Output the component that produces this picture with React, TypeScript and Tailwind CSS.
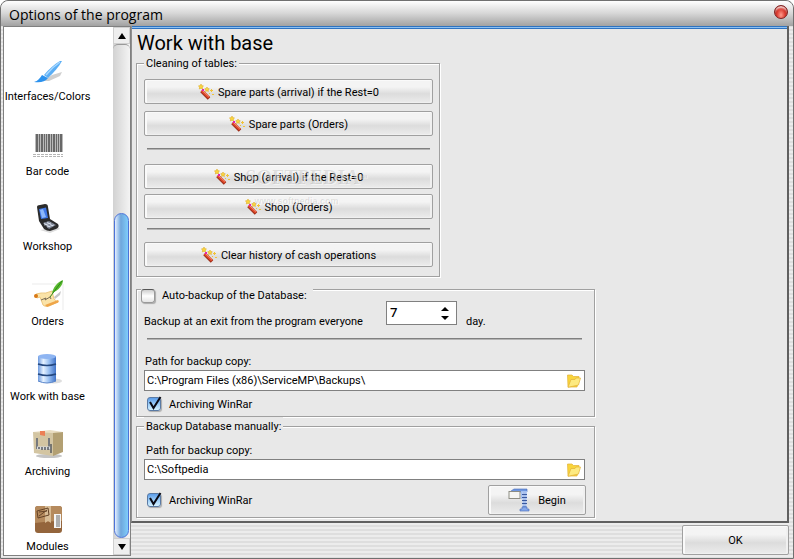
import clsx from 'clsx';
import { useState } from 'react';
import type { ComponentType, InputHTMLAttributes, ReactNode } from 'react';

function BrushIcon() {
  return (
    <svg viewBox="0 -3 32 32" className="size-8">
      <path d="M10 25 L20 19 L30 16 L28 20 L17 25 Z" fill="#cfcfcf" />
      <path d="M28 5 C24 7 17 13 12 19 L16 22 C22 16 27 11 30 5 Z" fill="#5aaef5" />
      <path d="M28 6 C22 10 18 14 14 19" stroke="#a8d8ff" strokeWidth="1.500" fill="none" />
      <path d="M10 19 L16 22 C13 26 8 27 2 26 C6 25 8 22 10 19 Z" fill="#2c92ee" />
    </svg>
  );
}

function BarcodeIcon() {
  const bars = [
    [4, 2], [7, 1], [9, 2], [12, 1], [14, 1], [16, 2], [19, 1], [21, 2], [24, 1], [26, 1], [28, 2],
  ];
  return (
    <svg viewBox="0 -2 32 32" className="size-8" shapeRendering="crispEdges">
      <rect x="3" y="4" width="28" height="18" fill="#b9b9b9" />
      {bars.map(([x, w]) => (
        <rect key={x} x={x} y="4" width={w} height="18" fill="#686868" />
      ))}
      <path d="M1 24h30M1 26h30" stroke="#b5b5b5" strokeDasharray="3 1" />
    </svg>
  );
}

function PhoneIcon() {
  return (
    <svg viewBox="0 0 32 32" className="size-8">
      <path d="M8 27 L26 24 L28 26 L18 30 Z" fill="#dcdcdc" />
      <path d="M5 4 Q5 2 8 2 L13 1 Q16 1 16 4 L18 16 L26 21 Q28 24 24 26 L18 28 Q15 28 12 26 L7 18 Z" fill="#2b2b2b" />
      <path d="M7 6 L14 4.500 L16 15 L9 16 Z" fill="#3f78e8" />
      <path d="M8 7 L11 6 L14 14 L10 15 Z" fill="#8db8fb" />
      <path d="M11 20 L17 18 L24 22 L17 26 Z" fill="#7c8494" />
      <path d="M12 20 l6 4 M15 19 l6 4 M12 22 l7-2 M15 24 l7-2" stroke="#e2e8f3" strokeWidth="0.800" />
    </svg>
  );
}

function ScrollIcon() {
  return (
    <svg viewBox="0 -1 32 32" className="size-8">
      <path d="M0 5h31v26" stroke="#ebebeb" fill="none" />
      <path d="M22 18 L29 12 L28 16 L23 20 Z" fill="#c4c4c4" />
      <path d="M4 15 Q2 18 5 19 L8 18 L11 26 Q12 28 17 27 L26 23 Q24 22 22 20 L20 12 Q13 15 9 14 Z" fill="#fae3a8" stroke="#e8bf6c" strokeWidth="0.800" />
      <circle cx="4" cy="17" r="2" fill="#d97917" />
      <path d="M13 26 L26 21 Q28 23 25 24 L15 28 Z" fill="#efa548" />
      <path d="M9 21 L14 19 L13 21 L18 18 L19 20" stroke="#7b6d54" fill="none" />
      <path d="M20 14 C21 9 25 3 31 1 C31 6 27 11 20 14 Z" fill="#58b82e" />
      <path d="M18 18 L30 2" stroke="#2b8a16" />
    </svg>
  );
}

function DatabaseIcon() {
  return (
    <svg viewBox="0 0 32 32" className="size-8">
      <defs>
        <linearGradient id="drum" x1="0" x2="1">
          <stop offset="0" stopColor="#6e9be0" />
          <stop offset="0.300" stopColor="#e6f2ff" />
          <stop offset="0.600" stopColor="#9cc2f3" />
          <stop offset="1" stopColor="#3f72c8" />
        </linearGradient>
      </defs>
      <ellipse cx="22" cy="28" rx="8" ry="2.500" fill="#dedede" />
      <path d="M6 3 v25 q9 4 18 0 v-25 z" fill="url(#drum)" />
      <path d="M6 11 q9 3 18 0 M6 21 q9 3 18 0" stroke="#24487f" strokeWidth="1.600" fill="none" />
      <ellipse cx="15" cy="3.500" rx="9" ry="2.500" fill="#8eb5f2" />
      <path d="M6 28 q9 4 18 0" stroke="#5b86ca" fill="none" />
    </svg>
  );
}

function ArchiveIcon() {
  return (
    <svg viewBox="0 0 32 32" className="size-8">
      <ellipse cx="17" cy="28" rx="13" ry="2" fill="#c4c4c4" />
      <path d="M1 4 L18 2 L31 4 L21 6 Z" fill="#e9ddc2" />
      <path d="M1 4 L21 5 V28 L2 25 Z" fill="#d3c5a2" />
      <path d="M21 5 L31 4 V24 L21 28 Z" fill="#b3a073" />
      <path d="M8 3 L13 3 V8 L8 7 Z" fill="#ec8056" />
      <path d="M5 10 V20 H15 M17 10 V22" stroke="#777a7e" strokeWidth="2" fill="none" />
      <path d="M5 20 H19" stroke="#d7dade" strokeWidth="3" />
      <path d="M7 19v2M10 19v3M13 19v3M16 19v3M19 16v9" stroke="#50545b" strokeWidth="1.400" />
    </svg>
  );
}

function ModulesIcon() {
  return (
    <svg viewBox="0 0 32 32" className="size-8">
      <rect x="3" y="3" width="27" height="27" rx="3" fill="#94653c" />
      <path d="M3 20 V6 Q3 3 6 3 H27 Q30 3 30 6 V18 Q16 18 3 20 Z" fill="#b58a5d" />
      <path d="M13 3 h6 v17 l-3-2 -3 2 z" fill="#d8bc95" />
      <path d="M5 8 L16 5 L17 12 L6 15 Z M7 9 L15 8 M7 13 L15 7" stroke="#644226" fill="none" />
      <rect x="22" y="11" width="7" height="14" fill="#f5f5f5" />
      <path d="M24 13h4M24 15h4M24 17h4M24 19h4M24 21h4M24 23h4" stroke="#666" />
    </svg>
  );
}

function WandIcon() {
  return (
    <svg viewBox="0 0 16 16" className="size-4 shrink-0">
      <path d="M3.500 7 L11 14.500" stroke="#9c2c18" strokeWidth="3.600" />
      <path d="M3.500 6.500 L11 13.500" stroke="#e04a2b" strokeWidth="2.400" />
      <path d="M5 7 L11 12.500" stroke="#f8ab90" strokeWidth="0.800" />
      <path d="M4 5 h2 v2 h-2 z" fill="#e21fb4" />
      <path d="M3 0 L3.800 1.600 L5.500 2 L4.300 3.200 L4.500 5 L3 4.200 L1.300 5 L1.600 3.200 L.4 2 L2.200 1.600 Z" fill="#fbd63c" stroke="#d9a21c" strokeWidth="0.500" />
      <path d="M9 3 L9.800 4.400 L11.400 4.800 L10.200 6 L10.400 7.600 L9 6.800 L7.500 7.600 L7.800 6 L6.600 4.800 L8.200 4.400 Z" fill="#fbd63c" stroke="#d9a21c" strokeWidth="0.500" />
      <path d="M13 5h1v1h1v1h-1v1h-1v-1h-1v-1h1zM11 9h1v1h-1zM14 10h2v1h-2z" fill="#f0c338" />
    </svg>
  );
}

function FolderIcon() {
  return (
    <svg viewBox="0 0 16 16" className="size-4">
      <path d="M1.500 2 H6 L7.500 3.500 H13 V6 L11 14 H2 Z" fill="#f9d53b" stroke="#e3b23a" strokeWidth="0.700" />
      <path d="M5 6.500 H9 L10 5 H14.500 L12.500 12 L2 14.300 Z" fill="#fdea80" stroke="#e3b23a" strokeWidth="0.700" />
    </svg>
  );
}

function ClampIcon() {
  return (
    <svg viewBox="0 0 22 24" className="h-6 w-[22px]">
      <path d="M3 3 L6 1 H19 V4 H3 Z" fill="#6f97e0" stroke="#4369b8" strokeWidth="0.600" />
      <rect x="13" y="3" width="6" height="8" fill="#a5c0f0" />
      <path d="M16.500 4 V20" stroke="#6f93d8" strokeWidth="4" />
      <path d="M14 5h5M14 8h5M14 11h5M14 14h5M14 17h5" stroke="#e4edff" />
      <path d="M14 6.500h5M14 9.500h5M14 12.500h5M14 15.500h5" stroke="#39589e" />
      <rect x="1" y="3.500" width="11" height="7" fill="#f6f6f3" stroke="#8d8d84" />
      <path d="M14 19 h5 v2 h2 v2 h-9 v-2 h2 z" fill="#86a8ea" stroke="#4369b8" strokeWidth="0.600" />
    </svg>
  );
}

interface Section {
  name: string;
  Icon: ComponentType;
}

const sections: Section[] = [
  { name: 'Interfaces/Colors', Icon: BrushIcon },
  { name: 'Bar code', Icon: BarcodeIcon },
  { name: 'Workshop', Icon: PhoneIcon },
  { name: 'Orders', Icon: ScrollIcon },
  { name: 'Work with base', Icon: DatabaseIcon },
  { name: 'Archiving', Icon: ArchiveIcon },
  { name: 'Modules', Icon: ModulesIcon },
];

function PushButton({ className, icon, children }: {
  className?: string;
  icon?: ReactNode;
  children: ReactNode;
}) {
  return (
    <button
      type="button"
      className={clsx(
        'flex items-center justify-center rounded-xs border border-[#a0a0a0] bg-linear-to-b from-[#f4f4f4] from-30% via-[#dcdcdc] via-60% to-[#ececec] shadow-[inset_2px_1px_0_#fafafa,inset_-2px_-1px_0_#f0f0f0]',
        className
      )}
    >
      {icon}
      <span className="pt-[2px]">{children}</span>
    </button>
  );
}

function Group({ className, legend, legendClass, children }: {
  className?: string;
  legend: ReactNode;
  legendClass?: string;
  children: ReactNode;
}) {
  return (
    <fieldset
      className={clsx(
        'border border-[#a0a0a0] pr-[6px] pl-[7px] shadow-[inset_1px_1px_0_#fff,1px_1px_0_#fff]',
        className
      )}
    >
      <legend className={clsx('bg-[#e8e8e8]', legendClass)}>{legend}</legend>
      {children}
    </fieldset>
  );
}

function Rule({ className }: { className: string }) {
  return <hr className={clsx('h-[2px] border-0 border-t border-b border-t-[#808080] border-b-[#b4b4b4]', className)} />;
}

function TickBox(props: InputHTMLAttributes<HTMLInputElement>) {
  return (
    <span className="relative size-[14px] shrink-0">
      <input
        type="checkbox"
        className="peer block size-[14px] appearance-none rounded-[3px] border border-[#999] border-t-[#555] bg-linear-to-b from-[#cfcfcf] via-white to-[#e4e4e4] shadow-[1px_1px_1px_#aaa] checked:border-[#5a7aa4] checked:from-[#5b9ce8] checked:via-[#9accf8] checked:to-[#d5f2ff]"
        {...props}
      />
      <svg viewBox="0 0 14 14" className="pointer-events-none absolute inset-0 hidden overflow-visible peer-checked:block">
        <path d="M3 5 L6.500 11 L13.500 0" fill="none" stroke="#0a0a14" strokeWidth="2" />
      </svg>
    </span>
  );
}

function PathField({ id, value }: { id: string; value: string }) {
  const [path, setPath] = useState(value);
  return (
    <div className="mr-[3px] flex h-[21px] items-center border border-[#808080] bg-white pr-[2px]">
      <input
        id={id}
        type="text"
        value={path}
        onChange={(e) => setPath(e.target.value)}
        className="min-w-0 flex-1 px-[2px] outline-none"
      />
      <button type="button" aria-label="Browse">
        <FolderIcon />
      </button>
    </div>
  );
}

export default function App() {
  const [days, setDays] = useState(7);

  return (
    <div className="flex min-h-screen flex-col rounded-t-lg border border-[#707070] bg-[repeating-linear-gradient(#dedede_0px,#dedede_2px,#ececec_2px,#ececec_4px)] font-['Roboto','Liberation_Sans',sans-serif] text-[11px] leading-4 text-black">
      <header className="flex h-[25px] items-center justify-between rounded-t-lg bg-linear-to-b from-white via-[#d6d6d6] to-[#a2a2a2] pr-[5px] pl-2">
        <h1 className="pt-[2px] font-['Open_Sans','Noto_Sans',sans-serif] text-[14px] leading-5">Options of the program</h1>
        <button
          type="button"
          aria-label="Close"
          className="mb-1 size-[14px] rounded-full border border-[#7d2020] bg-radial-[at_50%_75%] from-[#ff9a8c] via-[#d9382d] to-[#8f1f1c] shadow-[inset_0_3px_2px_-1px_#f5d6d3]"
        />
      </header>

      <div className="flex flex-1">
        <nav className="mb-[2px] ml-[2px] flex w-[128px] shrink-0 border border-[#808080] bg-white">
          <ul className="flex min-w-0 flex-1 flex-col gap-[23px] pt-[26px]">
            {sections.map(({ name, Icon }) => (
              <li key={name}>
                <a href="#" className="flex flex-col items-center gap-1 pr-[22px] whitespace-nowrap">
                  <Icon />
                  {name}
                </a>
              </li>
            ))}
          </ul>
          <div className="flex w-[17px] shrink-0 flex-col bg-linear-to-r from-[#d2d2d2] to-[#f4f4f4]">
            <button type="button" aria-label="Scroll up" className="flex h-[17px] items-center justify-center border border-[#cfcfcf] bg-[#eee]">
              <svg viewBox="0 0 8 6" className="h-[6px] w-2"><path d="M4 0 L8 6 H0 Z" /></svg>
            </button>
            <div className="h-[5px] rounded-t-full border-t border-[#999]" />
            <div className="flex-[164]" />
            <div className="mx-px flex-[323] rounded-lg border border-[#4d73d8] bg-linear-to-r from-[#e4efff] via-[#6fa6dc] via-45% to-[#7fcdfb]" />
            <button type="button" aria-label="Scroll down" className="flex h-[17px] items-center justify-center border border-[#cfcfcf] bg-[#eee]">
              <svg viewBox="0 0 8 6" className="h-[6px] w-2"><path d="M4 6 L8 0 H0 Z" /></svg>
            </button>
          </div>
        </nav>

        <div className="mr-1 flex min-w-0 flex-1 flex-col">
          <main className="flex-1 border-r-2 border-b-2 border-l border-r-[#606060] border-b-[#606060] border-l-[#909090] bg-[#e8e8e8]">
            <div className="h-[3px] border-y border-[#2f73c0] bg-[#8cc0f2]" />
            <div className="pl-1">
              <h2 className="pt-1 pl-px font-['Roboto',sans-serif] text-[20px] leading-[21px]">Work with base</h2>

              <Group className="w-[304px] pb-[9px]" legend="Cleaning of tables:" legendClass="px-[2px] pt-[2px]">
                <div className="flex flex-col pt-[7px]">
                  <PushButton className="h-[25px] gap-1" icon={<WandIcon />}>Spare parts (arrival) if the Rest=0</PushButton>
                  <PushButton className="mt-[7px] h-[25px] gap-1" icon={<WandIcon />}>Spare parts (Orders)</PushButton>
                  <Rule className="mx-[3px] mt-3" />
                  <div className="relative mt-[14px] flex flex-col gap-[5px]">
                    <PushButton className="h-[25px] gap-1" icon={<WandIcon />}>Shop (arrival) if the Rest=0</PushButton>
                    <PushButton className="h-[25px] gap-1" icon={<WandIcon />}>Shop (Orders)</PushButton>
                    <div className="pointer-events-none absolute inset-x-0 top-0 pl-9 text-center text-black/10 [text-shadow:1px_1px_0_rgba(255,255,255,0.5)]">
                      <p className="font-['Liberation_Serif',serif] text-[20px] leading-[27px] font-bold">SOFTPEDIA<sup className="text-[8px]">™</sup></p>
                      <p className="pr-5 font-['Liberation_Sans',sans-serif] text-[9px] leading-5 font-bold">www.softpedia.com</p>
                    </div>
                  </div>
                  <Rule className="mx-[3px] mt-[9px]" />
                  <PushButton className="mt-3 h-[25px] gap-1" icon={<WandIcon />}>Clear history of cash operations</PushButton>
                </div>
              </Group>

              <Group
                className="w-[459px] pb-[5px]"
                legendClass="-ml-[3px] h-6 bg-clip-content pt-3 leading-3"
                legend={
                  <label className="flex items-center gap-[7px] pr-[6px]">
                    <TickBox />
                    Auto-backup of the Database:
                  </label>
                }
              >
                <div className="flex items-start">
                  <label htmlFor="days" className="w-[242px] pt-[13px]">Backup at an exit from the program everyone</label>
                  <div className="flex h-6 w-[71px] border border-[#808080] bg-white">
                    <input
                      id="days"
                      type="text"
                      inputMode="numeric"
                      value={days}
                      onChange={(e) => setDays(Number(e.target.value) || 0)}
                      className="w-[54px] pb-[2px] pl-[3px] font-['Noto_Sans',sans-serif] text-[13px] font-medium outline-none"
                    />
                    <div className="flex flex-col justify-center gap-[5px]">
                      <button type="button" aria-label="More days" onClick={() => setDays(days + 1)}>
                        <svg viewBox="0 0 8 4" className="h-1 w-2"><path d="M4 0 L8 4 H0 Z" /></svg>
                      </button>
                      <button type="button" aria-label="Fewer days" onClick={() => setDays(Math.max(1, days - 1))}>
                        <svg viewBox="0 0 8 4" className="h-1 w-2"><path d="M4 4 L8 0 H0 Z" /></svg>
                      </button>
                    </div>
                  </div>
                  <span className="pt-[13px] pl-[9px]">day.</span>
                </div>
                <Rule className="mt-2 mr-[6px] ml-[3px]" />
                <label htmlFor="auto-path" className="mt-[14px] block pl-px">Path for backup copy:</label>
                <PathField id="auto-path" value="C:\Program Files (x86)\ServiceMP\Backups\" />
                <label className="mt-[6px] flex h-[14px] w-fit items-center gap-2 pl-[3px]">
                  <TickBox defaultChecked />
                  <span className="pt-[2px]">Archiving WinRar</span>
                </label>
              </Group>

              <Group className="w-[459px] pb-[2px]" legend="Backup Database manually:" legendClass="px-[2px] pt-[2px]">
                <label htmlFor="manual-path" className="mt-2 block pl-[2px]">Path for backup copy:</label>
                <PathField id="manual-path" value="C:\Softpedia" />
                <div className="mt-[5px] mr-[2px] flex items-center justify-between">
                  <label className="flex items-center gap-2 pl-[3px]">
                    <TickBox defaultChecked />
                    <span className="pt-[2px]">Archiving WinRar</span>
                  </label>
                  <PushButton className="h-[30px] w-[98px] gap-2" icon={<ClampIcon />}>Begin</PushButton>
                </div>
              </Group>
            </div>
          </main>
          <footer className="flex justify-end pt-[2px] pb-[3px]">
            <PushButton className="h-[30px] w-[107px]">OK</PushButton>
          </footer>
        </div>
      </div>
    </div>
  );
}
